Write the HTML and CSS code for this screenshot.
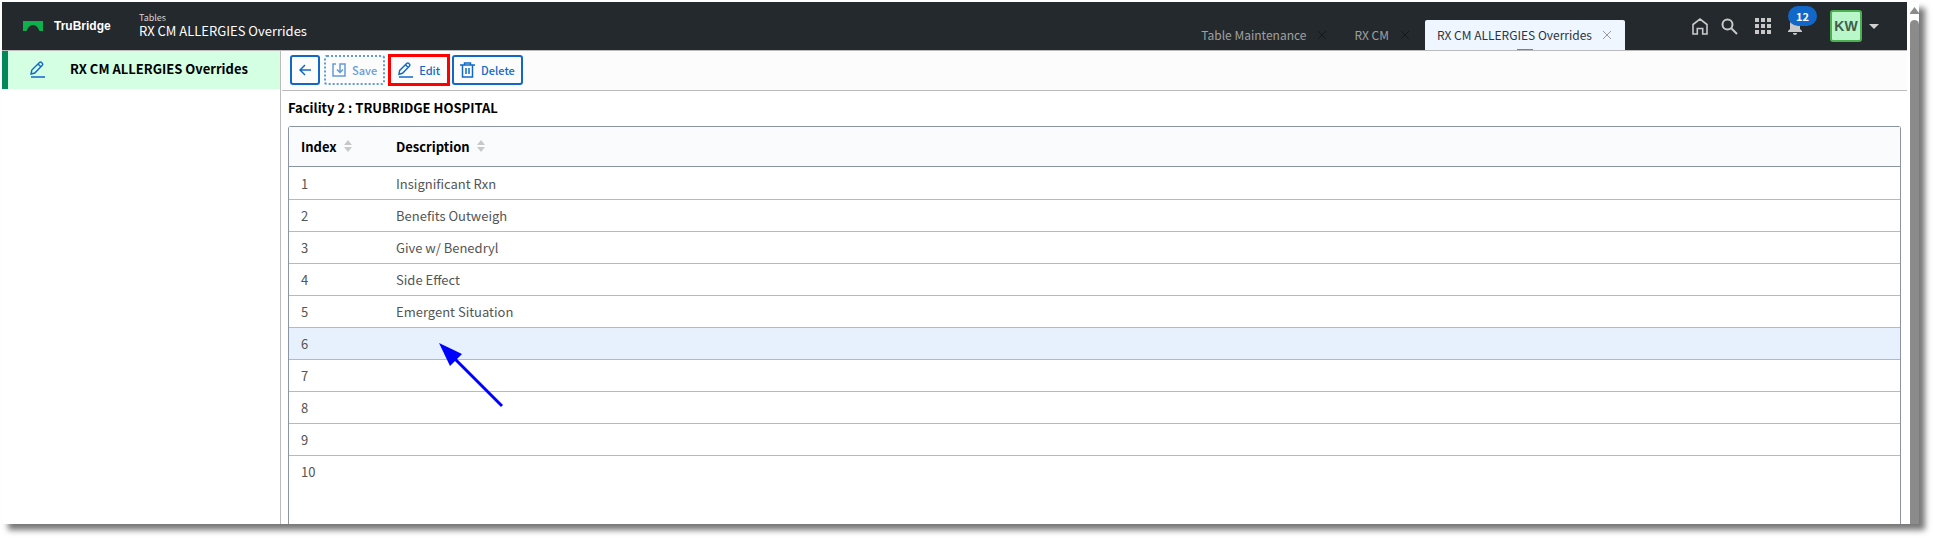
FILE: index.html
```html
<!DOCTYPE html>
<html lang="en">
<head>
    <meta charset="UTF-8">
    <meta name="viewport" content="width=device-width, initial-scale=1.0">
    <title>RX CM ALLERGIES Overrides</title>
    <link rel="stylesheet" href="styles.css">
</head>
<body>
    <div class="window">
        <div class="app">
            <header class="topbar">
                <a class="brand" href="#">
                    <svg width="20" height="10" viewBox="0 0 20 10"><path d="M0 0h20v10h-3.500C15 6 13 4 10 4S5 6 3.500 10H0z" fill="#0cb14b"/></svg>
                    <span>TruBridge</span>
                </a>
                <div class="page-title">
                    <div class="page-group">Tables</div>
                    <div class="page-name">RX CM ALLERGIES Overrides</div>
                </div>
                <nav class="tabs">
                    <div class="tab">
                        <a href="#">Table Maintenance</a>
                        <button class="tab-close" aria-label="Close Table Maintenance"><svg width="8" height="8" viewBox="0 0 8 8"><path d="M0 0l8 8M8 0L0 8"/></svg></button>
                    </div>
                    <div class="tab">
                        <a href="#">RX CM</a>
                        <button class="tab-close" aria-label="Close RX CM"><svg width="8" height="8" viewBox="0 0 8 8"><path d="M0 0l8 8M8 0L0 8"/></svg></button>
                    </div>
                    <div class="tab active">
                        <a href="#">RX CM ALLERGIES Overrides</a>
                        <button class="tab-close" aria-label="Close RX CM ALLERGIES Overrides"><svg width="8" height="8" viewBox="0 0 8 8"><path d="M0 0l8 8M8 0L0 8"/></svg></button>
                    </div>
                </nav>
                <div class="tools">
                    <button class="tool" aria-label="Home">
                        <svg width="16" height="17" viewBox="0 0 16 17" fill="none" stroke="#c8c8c8" stroke-width="1.600"><path d="M1 6.500L8 1l7 5.500V16h-4.300v-5.500H5.300V16H1z"/></svg>
                    </button>
                    <button class="tool" aria-label="Search">
                        <svg width="17" height="17" viewBox="0 0 17 17" fill="none" stroke="#c8c8c8" stroke-width="2"><circle cx="6.500" cy="6.500" r="5"/><path d="M10 10l6 6"/></svg>
                    </button>
                    <button class="tool" aria-label="Apps">
                        <svg width="16" height="16" viewBox="0 0 16 16" fill="#c8c8c8"><path d="M0 0h4v4H0zM6 0h4v4H6zM12 0h4v4h-4zM0 6h4v4H0zM6 6h4v4H6zM12 6h4v4h-4zM0 12h4v4H0zM6 12h4v4H6zM12 12h4v4h-4z"/></svg>
                    </button>
                    <button class="tool bell" aria-label="Notifications">
                        <svg width="14" height="18" viewBox="0 0 14 18" fill="#c8c8c8"><path d="M7 0c.8 0 1.300.6 1.300 1.400C10.800 2 12 4.200 12 7v5l2 2v1H0v-1l2-2V7c0-2.800 1.200-5 3.700-5.600C5.700.6 6.200 0 7 0zM5 16h4c0 1.200-.8 2-2 2s-2-.8-2-2z"/></svg>
                        <span class="badge">12</span>
                    </button>
                    <button class="user">
                        <span class="avatar">KW</span>
                        <svg width="10" height="5" viewBox="0 0 10 5"><path d="M0 0h10L5 5z" fill="#d0d0d0"/></svg>
                    </button>
                </div>
            </header>
            <div class="layout">
                <aside class="sidebar">
                    <a class="side-item" href="#">
                        <svg width="16" height="17" viewBox="0 0 16 17" fill="none" stroke="#1168c9" stroke-width="1.400"><path d="M1 13l.8-4L9.500 1.400c.6-.6 1.300-.6 1.900 0l.9.9c.6.6.6 1.300 0 1.900L4.800 12zM8 3l2.800 2.800M1 16h14"/></svg>
                        <span>RX CM ALLERGIES Overrides</span>
                    </a>
                </aside>
                <main class="main">
                    <div class="toolbar">
                        <button class="btn btn-back" aria-label="Back">
                            <svg width="12" height="12" viewBox="0 0 12 12" fill="none" stroke="#1168c9" stroke-width="1.500"><path d="M12 6H1M6 1L1 6l5 5"/></svg>
                        </button>
                        <button class="btn btn-save" disabled>
                            <svg width="14" height="14" viewBox="0 0 14 14" fill="none" stroke="#1168c9" stroke-width="1.500"><path d="M4 1H1v12h12V1H8v8M5 6.500l3 3 3-3"/></svg>
                            Save
                        </button>
                        <button class="btn btn-edit">
                            <svg width="15" height="16" viewBox="0 0 16 17" fill="none" stroke="#1168c9" stroke-width="1.500"><path d="M1 13l.8-4L9.500 1.400c.6-.6 1.300-.6 1.900 0l.9.9c.6.6.6 1.300 0 1.900L4.800 12zM8 3l2.800 2.800M1 16h15"/></svg>
                            Edit
                        </button>
                        <button class="btn btn-delete">
                            <svg width="15" height="16" viewBox="0 0 15 16" fill="none" stroke="#1168c9" stroke-width="1.500"><path d="M0 3h15M4.500 3V1h6v2M2.500 3v12h10V3M6 6v6M9 6v6"/></svg>
                            Delete
                        </button>
                    </div>
                    <h1 class="facility">Facility 2 : TRUBRIDGE HOSPITAL</h1>
                    <div class="table-wrap">
                        <table>
                            <thead>
                                <tr>
                                    <th class="col-index">Index <svg class="sort" width="8" height="12" viewBox="0 0 8 12"><path d="M4 0l4 5H0zM0 7h8l-4 5z"/></svg></th>
                                    <th>Description <svg class="sort" width="8" height="12" viewBox="0 0 8 12"><path d="M4 0l4 5H0zM0 7h8l-4 5z"/></svg></th>
                                </tr>
                            </thead>
                            <tbody>
                                <tr><td>1</td><td>Insignificant Rxn</td></tr>
                                <tr><td>2</td><td>Benefits Outweigh</td></tr>
                                <tr><td>3</td><td>Give w/ Benedryl</td></tr>
                                <tr><td>4</td><td>Side Effect</td></tr>
                                <tr><td>5</td><td>Emergent Situation</td></tr>
                                <tr class="selected">
                                    <td>6</td>
                                    <td><svg class="pointer" width="66" height="66" viewBox="0 0 66 66"><path d="M14 14l49 49" stroke="#00f" stroke-width="3"/><path d="M0 0l23 11-12 12z" fill="#00f"/></svg></td>
                                </tr>
                                <tr><td>7</td><td></td></tr>
                                <tr><td>8</td><td></td></tr>
                                <tr><td>9</td><td></td></tr>
                                <tr><td>10</td><td></td></tr>
                            </tbody>
                        </table>
                    </div>
                </main>
            </div>
        </div>
        <div class="scrollbar">
            <svg width="9" height="7" viewBox="0 0 9 7"><path d="M4.500 0L9 6v1H0V6z" fill="#8b8b8b"/></svg>
            <div class="thumb"></div>
        </div>
    </div>
</body>
</html>
```
FILE: styles.css
```css
* {
    box-sizing: border-box;
}
body {
    margin: 0;
    padding: 2px 14px 14px 2px;
    height: 100vh;
    background: #fff;
    font-family: "Noto Sans CJK SC", "Noto Sans", sans-serif;
    font-size: 13px;
    line-height: 20px;
    color: #555;
}
button {
    font: inherit;
    color: inherit;
    background: none;
    border: none;
    padding: 0;
    cursor: pointer;
}
a {
    color: inherit;
    text-decoration: none;
}
svg {
    display: block;
    flex: none;
}
.window {
    display: flex;
    height: 100%;
    background: #fff;
    box-shadow: 6px 6px 6px #777;
}
.app {
    flex: 1;
    min-width: 0;
    display: flex;
    flex-direction: column;
}
.topbar {
    display: flex;
    height: 49px;
    flex: none;
    background: #24292e;
    border-bottom: 1px solid #bbb;
}
.brand {
    display: flex;
    align-items: center;
    gap: 11px;
    width: 137px;
    padding-left: 21px;
    color: #fff;
    font-family: "Liberation Sans", Arial, sans-serif;
    font-size: 12px;
    font-weight: bold;
}
.page-title {
    padding-top: 8px;
    color: #fff;
}
.page-group {
    font-size: 9px;
    line-height: 16px;
    color: #d4d4d4;
}
.page-name {
    line-height: 10px;
}
.tabs {
    display: flex;
    align-items: flex-end;
    margin-left: auto;
    font-size: 12px;
}
.tab {
    position: relative;
    display: flex;
    align-items: center;
    gap: 12px;
    height: 30px;
    padding: 0 16px 1px 12px;
    color: #a0a0a0;
}
.tab-close svg {
    stroke: #15181b;
}
.tab.active {
    gap: 11px;
    padding: 0 14px 1px 12px;
    background: #eff6ff;
    color: #2b3440;
    border-radius: 2px 2px 0 0;
}
.tab.active::after {
    content: "";
    position: absolute;
    left: calc(50% - 8px);
    bottom: 0;
    width: 16px;
    height: 1px;
    background: #1ba3cf;
}
.tab.active .tab-close svg {
    stroke: #999;
}
.tools {
    display: flex;
    align-items: center;
    padding: 0 28px 0 67px;
    height: 48px;
}
.tool {
    margin-right: 13px;
}
.tool + .tool {
    margin-right: 17px;
}
.bell {
    position: relative;
}
.tool.bell {
    margin-right: 28px;
}
.badge {
    position: absolute;
    left: 0;
    top: -11px;
    width: 29px;
    height: 20px;
    border-radius: 10px;
    background: #1168c9;
    color: #fff;
    font-size: 11px;
    font-weight: bold;
    line-height: 20px;
}
.user {
    display: flex;
    align-items: center;
    gap: 7px;
}
.avatar {
    width: 32px;
    height: 32px;
    border: 2px solid #4caf50;
    border-radius: 3px;
    background: #b9f6ca;
    color: #3f5f4b;
    font-family: "Liberation Sans", Arial, sans-serif;
    font-size: 14px;
    font-weight: bold;
    line-height: 28px;
}
.layout {
    display: flex;
    flex: 1;
    min-height: 0;
}
.sidebar {
    width: 279px;
    flex: none;
    border-right: 1px solid #bbb;
}
.side-item {
    display: flex;
    align-items: center;
    gap: 24px;
    height: 38px;
    padding: 0 0 2px 22px;
    border-left: 6px solid #00875a;
    background: #d5ffe3;
    color: #000;
    font-weight: bold;
}
.main {
    flex: 1;
    min-width: 0;
    display: flex;
    flex-direction: column;
}
.toolbar {
    display: flex;
    align-items: center;
    height: 40px;
    flex: none;
    margin-left: 1px;
    padding: 0 8px 1px;
    background: #fcfcfc;
    border-bottom: 1px solid #bbb;
}
.btn {
    display: flex;
    align-items: center;
    justify-content: center;
    gap: 6px;
    height: 30px;
    padding: 0 6px;
    border: 2px solid #1168c9;
    border-radius: 3px;
    color: #1168c9;
    font-size: 11px;
    font-weight: 500;
}
.btn-back {
    width: 30px;
    margin-right: 4px;
}
.btn-save {
    border-style: dotted;
    opacity: 0.65;
    margin-right: 3px;
}
.btn-edit {
    height: 32px;
    padding: 0 7px;
    border: 3px solid #f00;
    border-radius: 0;
    margin-right: 2px;
}
.facility {
    margin: 7px 0 8px 7px;
    font-size: 13px;
    line-height: 20px;
    font-weight: bold;
    color: #000;
}
.table-wrap {
    flex: 1;
    min-height: 0;
    margin: 0 6px 0 7px;
    border: 1px solid #8a94a3;
    border-bottom: none;
    border-radius: 3px 3px 0 0;
}
table {
    width: 100%;
    border-collapse: collapse;
}
th,
td {
    padding: 2px 12px 0;
    text-align: left;
    border-bottom: 1px solid #b5b9c0;
}
th {
    height: 39px;
    background: #fafbfd;
    border-bottom-color: #8a94a3;
    color: #000;
    font-weight: bold;
}
td {
    height: 32px;
}
tbody tr:first-child td {
    height: 33px;
}
.col-index {
    width: 95px;
    white-space: nowrap;
}
.sort {
    display: inline-block;
    margin-left: 4px;
    fill: #c8c8c8;
}
tbody tr:last-child td {
    border-bottom: none;
}
.selected td {
    position: relative;
    background: #e7f1fe;
}
.pointer {
    position: absolute;
    left: 55px;
    top: 15px;
    z-index: 1;
}
.scrollbar {
    display: flex;
    flex-direction: column;
    align-items: flex-end;
    width: 12px;
    padding-top: 5px;
}
.thumb {
    flex: 1;
    width: 9px;
    margin-top: 6px;
    border-radius: 5px 5px 0 0;
    background: #8b8b8b;
}
```
